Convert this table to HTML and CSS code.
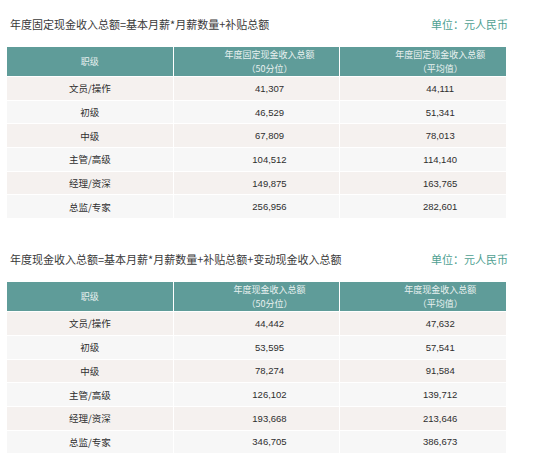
FILE: index.html
```html
<!DOCTYPE html>
<html lang="zh">
<head>
<meta charset="utf-8">
<link rel="stylesheet" href="styles.css">
</head>
<body>
<section class="block first">
  <div class="title-row">
    <div class="title">年度固定现金收入总额=基本月薪*月薪数量+补贴总额</div>
    <div class="unit">单位：元人民币</div>
  </div>
  <table class="data">
    <thead>
      <tr><th class="c1">职级</th><th class="c2">年度固定现金收入总额<br>（50分位）</th><th class="c3">年度固定现金收入总额<br>（平均值）</th></tr>
    </thead>
    <tbody>
      <tr><td class="c1">文员/操作</td><td class="c2">41,307</td><td class="c3">44,111</td></tr>
      <tr><td class="c1">初级</td><td class="c2">46,529</td><td class="c3">51,341</td></tr>
      <tr><td class="c1">中级</td><td class="c2">67,809</td><td class="c3">78,013</td></tr>
      <tr><td class="c1">主管/高级</td><td class="c2">104,512</td><td class="c3">114,140</td></tr>
      <tr><td class="c1">经理/资深</td><td class="c2">149,875</td><td class="c3">163,765</td></tr>
      <tr><td class="c1">总监/专家</td><td class="c2">256,956</td><td class="c3">282,601</td></tr>
    </tbody>
  </table>
</section>
<section class="block second">
  <div class="title-row">
    <div class="title">年度现金收入总额=基本月薪*月薪数量+补贴总额+变动现金收入总额</div>
    <div class="unit">单位：元人民币</div>
  </div>
  <table class="data">
    <thead>
      <tr><th class="c1">职级</th><th class="c2">年度现金收入总额<br>（50分位）</th><th class="c3">年度现金收入总额<br>（平均值）</th></tr>
    </thead>
    <tbody>
      <tr><td class="c1">文员/操作</td><td class="c2">44,442</td><td class="c3">47,632</td></tr>
      <tr><td class="c1">初级</td><td class="c2">53,595</td><td class="c3">57,541</td></tr>
      <tr><td class="c1">中级</td><td class="c2">78,274</td><td class="c3">91,584</td></tr>
      <tr><td class="c1">主管/高级</td><td class="c2">126,102</td><td class="c3">139,712</td></tr>
      <tr><td class="c1">经理/资深</td><td class="c2">193,668</td><td class="c3">213,646</td></tr>
      <tr><td class="c1">总监/专家</td><td class="c2">346,705</td><td class="c3">386,673</td></tr>
    </tbody>
  </table>
</section>
</body>
</html>
```
FILE: styles.css
```css
html, body {
  margin: 0;
  padding: 0;
  background: #ffffff;
}
body {
  font-family: "Liberation Sans", "Noto Sans CJK SC", sans-serif;
  color: #333333;
}
.block {
  padding-left: 7px;
  width: 501px;
}
.first {
  padding-top: 15px;
}
.second {
  padding-top: 31px;
}
.title-row {
  display: flex;
  justify-content: space-between;
  align-items: center;
  height: 17px;
  padding-left: 3px;
  margin-bottom: 14px;
}
.title {
  font-family: "Noto Sans CJK SC", sans-serif;
  font-size: 11px;
  color: #3a3a3a;
}
.unit {
  font-family: "Noto Sans CJK SC", sans-serif;
  font-size: 11px;
  color: #4f9f92;
}
.data {
  width: 501px;
  border-collapse: separate;
  border-spacing: 1px;
  table-layout: fixed;
  margin-left: -1px;
}
.data th {
  background: #5f9c99;
  color: #e9f1f0;
  font-family: "Noto Sans CJK SC", sans-serif;
  font-weight: normal;
  font-size: 9px;
  line-height: 14px;
  height: 29px;
  padding: 0;
  text-align: center;
}
.data td {
  font-size: 9.5px;
  height: 22.7px;
  padding: 0;
  text-align: center;
  color: #2e2e2e;
}
.data td.c1 {
  font-family: "Noto Sans CJK SC", sans-serif;
}
.data tbody tr:nth-child(odd) td {
  background: #f5f1ef;
}
.data tbody tr:nth-child(even) td {
  background: #f7f7f7;
}
.data .c2 {
  padding-left: 26px;
}
.data .c3 {
  padding-left: 34px;
}
```
